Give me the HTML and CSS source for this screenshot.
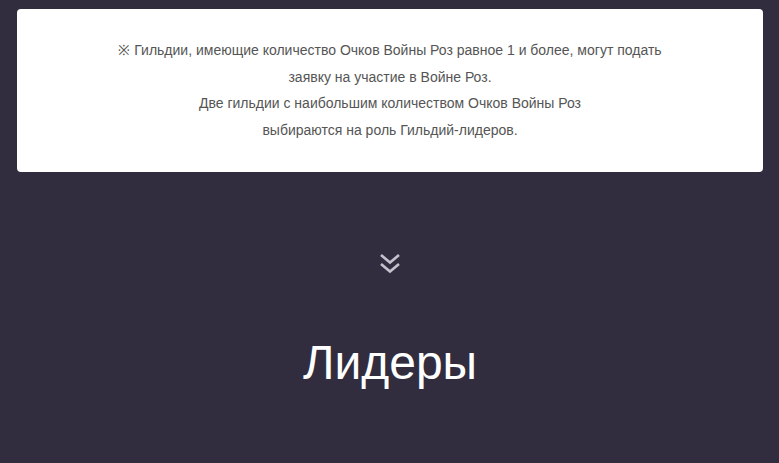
FILE: index.html
```html
<!DOCTYPE html>
<html lang="ru">

<head>
  <meta charset="UTF-8">
  <title>Война Роз</title>
  <link rel="stylesheet" href="styles.css">
</head>

<body>

  <div class="page">
    <div class="notice">
      <p>※ Гильдии, имеющие количество Очков Войны Роз равное 1 и более, могут подать<br>
        заявку на участие в Войне Роз.<br>
        Две гильдии с наибольшим количеством Очков Войны Роз<br>
        выбираются на роль Гильдий-лидеров.</p>
    </div>

    <div class="arrow">
      <svg width="22" height="22" viewBox="0 0 22 22">
        <polyline points="2,3 11,10.5 20,3" fill="none" stroke="#c4c2cc" stroke-width="2.6" />
        <polyline points="2,12 11,19.5 20,12" fill="none" stroke="#c4c2cc" stroke-width="2.6" />
      </svg>
    </div>

    <h1 class="title">Лидеры</h1>
  </div>

</body>

</html>
```

FILE: styles.css
```css
body {
  margin: 0;
  background: #312d3f;
  font-family: "Liberation Sans", Arial, sans-serif;
}

.page {
  padding: 9px 16px 0 17px;
}

.notice {
  background: #ffffff;
  border-radius: 4px;
  padding: 28px 20px 28px;
  text-align: center;
}

.notice p {
  margin: 0;
  color: #555555;
  font-size: 14px;
  line-height: 26.7px;
}

.arrow {
  display: flex;
  justify-content: center;
  margin-top: 80px;
}

.arrow svg {
  display: block;
}

.title {
  margin: 61px 0 0;
  text-align: center;
  color: #ffffff;
  font-size: 48px;
  font-weight: normal;
  line-height: 56px;
}
```
